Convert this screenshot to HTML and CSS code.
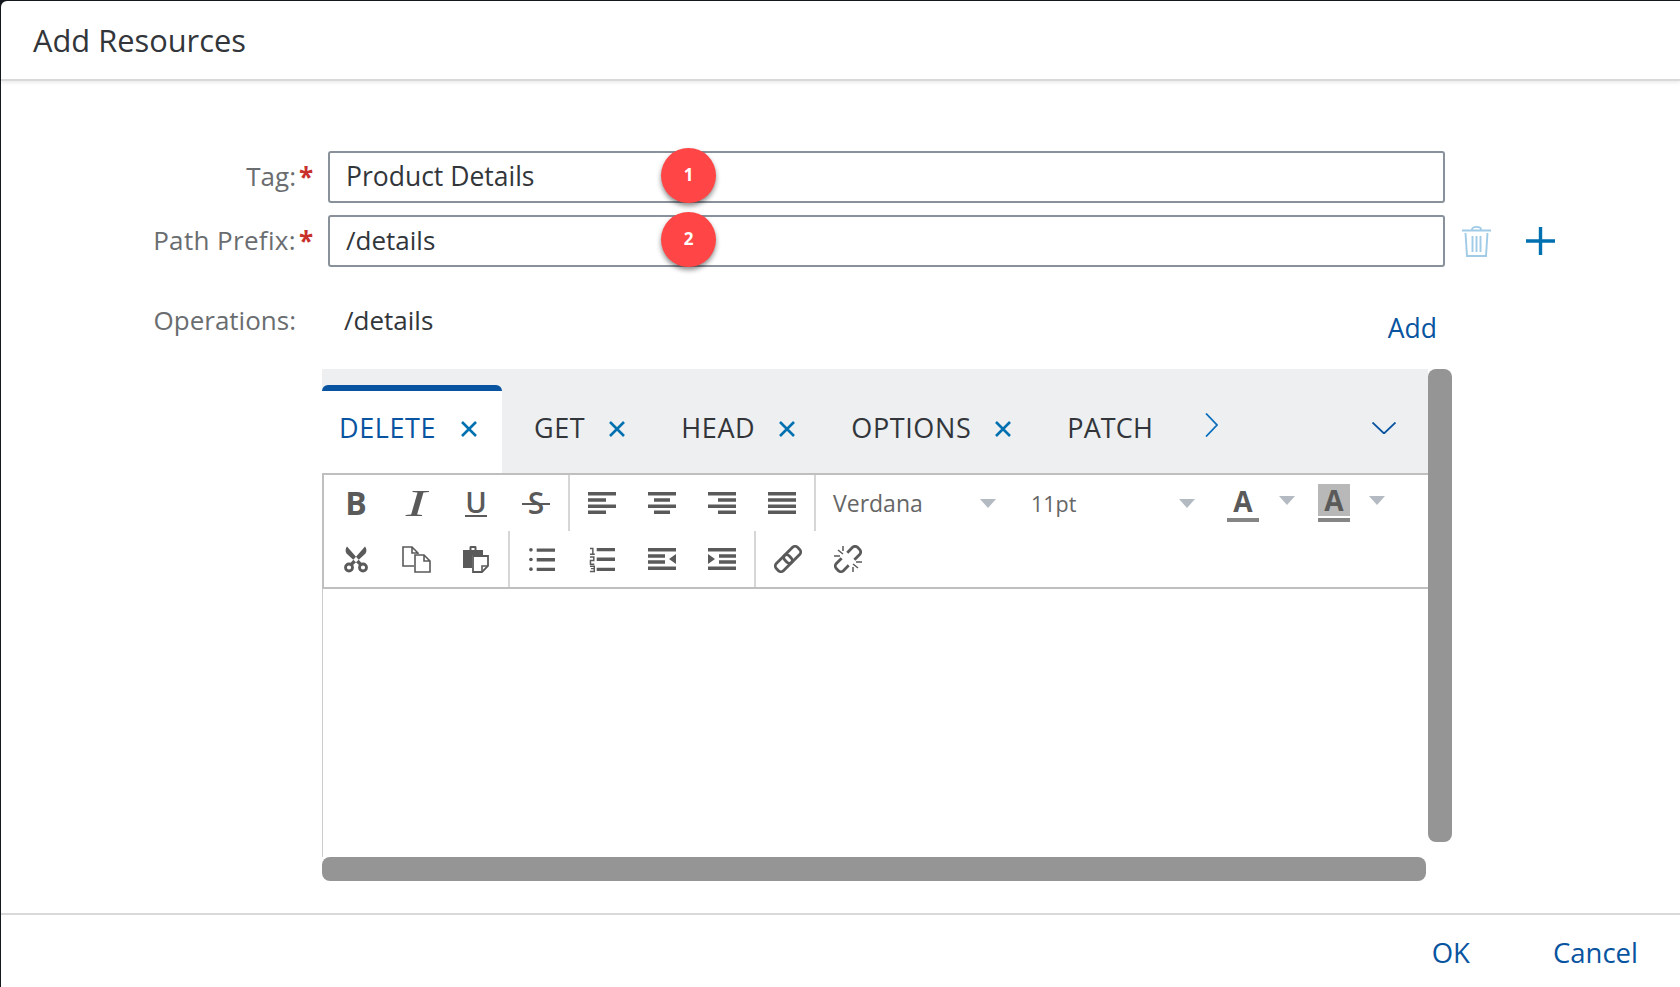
FILE: index.html
```html
<!DOCTYPE html>
<html lang="en">
<head>
    <meta charset="UTF-8">
    <title>Add Resources</title>
    <link rel="stylesheet" href="styles.css">
</head>
<body>

<div class="dialog">
    <div class="header">Add Resources</div>

    <div class="content">
        <div class="row">
            <div class="label">Tag:</div>
            <div class="star">*</div>
            <div class="field">Product Details<span class="badge">1</span></div>
        </div>
        <div class="row row-path">
            <div class="label label-path">Path Prefix:</div>
            <div class="star">*</div>
            <div class="field field-path">/details<span class="badge">2</span></div>
            <svg class="trash" viewBox="0 0 29 32" fill="none" stroke="#9fcbe7" stroke-width="1.900">
                <path d="M0 5.500H29M10 4.500C10 1 19 1 19 4.500M3.500 8L5 31H24L25.500 8M10.500 11V27M14.500 11V27M18.500 11V27"/>
            </svg>
            <svg class="plus" viewBox="0 0 29 28" fill="none" stroke="#0070b1" stroke-width="3.400">
                <path d="M0 14H29M14.500 0V28"/>
            </svg>
        </div>
        <div class="row row-ops">
            <div class="label">Operations:</div>
            <div class="star"></div>
            <div class="ops-value">/details</div>
            <a class="add" href="javascript:;">Add</a>
        </div>

        <div class="editor-wrap">
            <div class="editor-main">
                <!-- tabs -->
                <div class="tabbar">
                    <div class="tab cur">DELETE<svg class="close" viewBox="0 0 16 16"><path d="M1 1L15 15M15 1L1 15"/></svg></div>
                    <div class="tab">GET<svg class="close" viewBox="0 0 16 16"><path d="M1 1L15 15M15 1L1 15"/></svg></div>
                    <div class="tab">HEAD<svg class="close" viewBox="0 0 16 16"><path d="M1 1L15 15M15 1L1 15"/></svg></div>
                    <div class="tab">OPTIONS<svg class="close" viewBox="0 0 16 16"><path d="M1 1L15 15M15 1L1 15"/></svg></div>
                    <div class="tab tab-last">PATCH</div>
                    <svg class="chev-right" viewBox="0 0 13 24"><path d="M1 0.500L12 12L1 23.500"/></svg>
                    <svg class="chev-down" viewBox="0 0 24 12"><path d="M0.500 0.500L12 11.500L23.500 0.500"/></svg>
                </div>

                <!-- toolbar -->
                <div class="toolbar">
                    <div class="tool-row">
                        <div class="group">
                            <div class="btn"><span class="t-b">B</span></div>
                            <div class="btn"><span class="t-i">I</span></div>
                            <div class="btn"><span class="t-u">U</span></div>
                            <div class="btn"><span class="t-s">S</span></div>
                        </div>
                        <div class="group">
                            <div class="btn"><svg class="ico" viewBox="0 0 28 22"><path d="M0 0H28V3.500H0ZM0 6.300H18V9.800H0ZM0 12.600H28V16.100H0ZM0 18.500H18V22H0Z"/></svg></div>
                            <div class="btn"><svg class="ico" viewBox="0 0 28 22"><path d="M0 0H28V3.500H0ZM6 6.300H22V9.800H6ZM0 12.600H28V16.100H0ZM6 18.500H22V22H6Z"/></svg></div>
                            <div class="btn"><svg class="ico" viewBox="0 0 28 22"><path d="M0 0H28V3.500H0ZM10 6.300H28V9.800H10ZM0 12.600H28V16.100H0ZM10 18.500H28V22H10Z"/></svg></div>
                            <div class="btn"><svg class="ico" viewBox="0 0 28 22"><path d="M0 0H28V3.500H0ZM0 6.300H28V9.800H0ZM0 12.600H28V16.100H0ZM0 18.500H28V22H0Z"/></svg></div>
                        </div>
                        <div class="select">Verdana<i class="caret"></i></div>
                        <div class="select select-size">11pt<i class="caret"></i></div>
                        <div class="color-a"><span>A</span></div>
                        <i class="caret caret-a"></i>
                        <div class="color-a color-bg"><span>A</span></div>
                        <i class="caret caret-b"></i>
                    </div>
                    <div class="tool-row">
                        <div class="group">
                            <div class="btn">
                                <svg class="ico-lg" viewBox="0 0 26 26" fill="#5a5a5a">
                                    <path d="M4 0L19 17L16.500 19L3.500 7C2 4.500 2.500 2 4 0ZM22 0L7 17L9.500 19L22.500 7C24 4.500 23.500 2 22 0Z"/>
                                    <circle cx="6" cy="21" r="3.500" fill="none" stroke="#5a5a5a" stroke-width="2.800"/>
                                    <circle cx="20" cy="21" r="3.500" fill="none" stroke="#5a5a5a" stroke-width="2.800"/>
                                </svg>
                            </div>
                            <div class="btn">
                                <svg class="ico-lg ico-wide" viewBox="0 0 29 27" fill="none" stroke="#5a5a5a" stroke-width="1.600">
                                    <path d="M12 20H1V1H10L16 7V8M10 1V7H16"/>
                                    <path d="M13 9H22L28 15V26H13ZM22 9V15H28"/>
                                </svg>
                            </div>
                            <div class="btn">
                                <svg class="ico-lg" viewBox="0 0 26 27" fill="#5a5a5a">
                                    <path d="M0 4H6.500V1.500C6.500 0.500 7 0 8 0H12C13 0 13.500 0.500 13.500 1.500V4H20V9H9V22H0ZM8.500 2V4H11.500V2Z"/>
                                    <path d="M10 10H25V20L19 26H10Z" fill="#fff" stroke="#5a5a5a" stroke-width="1.800"/>
                                    <path d="M19 26V20H25" fill="none" stroke="#5a5a5a" stroke-width="1.600"/>
                                </svg>
                            </div>
                        </div>
                        <div class="group">
                            <div class="btn">
                                <svg class="ico-lg" viewBox="0 0 27 24" fill="#5a5a5a">
                                    <circle cx="2" cy="2" r="1.900"/><circle cx="2" cy="12" r="1.900"/><circle cx="2" cy="22" r="1.900"/>
                                    <path d="M8 0.500H27V4H8ZM8 10.500H27V14H8ZM8 20.500H27V24H8Z"/>
                                </svg>
                            </div>
                            <div class="btn">
                                <svg class="ico-lg" viewBox="0 0 27 26" fill="#5a5a5a">
                                    <path d="M8 1H27V4.500H8ZM8 11H27V14.500H8ZM8 21.500H27V25H8Z"/>
                                    <path d="M1 1.500H4V7M1 7.500H6M1 10.500H5V14H1.500V18H5.500M1 20H5.500V22.500H2M5.500 22.500V25.500H1" fill="none" stroke="#5a5a5a" stroke-width="1.500"/>
                                </svg>
                            </div>
                            <div class="btn">
                                <svg class="ico" viewBox="0 0 28 22"><path d="M0 0H28V3.500H0ZM0 6.300H17V9.800H0ZM0 12.300H17V15.800H0ZM0 18.500H28V22H0ZM28 6V16L21 11Z"/></svg>
                            </div>
                            <div class="btn">
                                <svg class="ico" viewBox="0 0 28 22"><path d="M0 0H28V3.500H0ZM11 6.300H28V9.800H11ZM11 12.300H28V15.800H11ZM0 18.500H28V22H0ZM0 6V16L7 11Z"/></svg>
                            </div>
                        </div>
                        <div class="group group-last">
                            <div class="btn">
                                <svg class="ico-lg ico-link" viewBox="0 0 28 28" fill="none" stroke="#5a5a5a" stroke-width="2.800">
                                    <g transform="rotate(-45 14 14)">
                                        <rect x="-1" y="9" width="18" height="10" rx="3.500"/>
                                        <rect x="11" y="9" width="18" height="10" rx="3.500"/>
                                    </g>
                                </svg>
                            </div>
                            <div class="btn">
                                <svg class="ico-lg ico-link" viewBox="0 0 28 28" fill="none" stroke="#5a5a5a" stroke-width="2.800">
                                    <g transform="rotate(-45 14 14)">
                                        <path d="M10 9H2.500A3.500 3.500 0 0 0 -1 12.500V15.500A3.500 3.500 0 0 0 2.500 19H10"/>
                                        <path d="M18 9H25.500A3.500 3.500 0 0 1 29 12.500V15.500A3.500 3.500 0 0 1 25.500 19H18"/>
                                    </g>
                                    <path stroke-width="1.500" d="M4 5L9 9M9 1V6M0 11H6M19 19L24 23M22 17H28M19 22V27"/>
                                </svg>
                            </div>
                        </div>
                    </div>
                </div>

                <div class="edit-area"></div>
                <div class="hscroll"></div>
            </div>
            <div class="vscroll"></div>
        </div>
    </div>

    <div class="footer">
        <a href="javascript:;">OK</a>
        <a href="javascript:;">Cancel</a>
    </div>
</div>

</body>
</html>
```

FILE: styles.css
```css
*{
    margin: 0;
    padding: 0;
    box-sizing: border-box;
}
a{
    text-decoration: none;
    color: #0854a0;
}
html, body{
    width: 100%;
    height: 100%;
    overflow: hidden;
}
body{
    background-color: #14181c;
    padding: 1px 0 0 1px;
    font-family: "Open Sans", "Liberation Sans", sans-serif;
    color: #32363a;
}
.dialog{
    height: 986px;
    background-color: #fff;
    border-top-left-radius: 6px;
    display: flex;
    flex-direction: column;
}
.header{
    height: 80px;
    flex: none;
    padding-left: 32px;
    display: flex;
    align-items: center;
    font-size: 30.800px;
    border-bottom: 2px solid #d9d9d9;
    box-shadow: 0 2px 3px rgba(0,0,0,0.08);
}

/* form */
.content{
    flex: 1;
    padding-top: 70px;
}
.row{
    display: flex;
    align-items: center;
    height: 52px;
}
.row-path{
    margin-top: 12px;
}
.row-ops{
    margin-top: 34px;
    height: 40px;
    width: 1444px;
}
.label{
    width: 295px;
    padding-bottom: 2px;
    text-align: right;
    font-size: 26px;
    color: #6a6d70;
}
.label-path{
    letter-spacing: 0.35px;
}
.star{
    width: 32px;
    padding-left: 3px;
    font-size: 26px;
    font-weight: 700;
    color: #c9302c;
}
.field{
    position: relative;
    width: 1117px;
    height: 52px;
    border: 2px solid #89919a;
    border-radius: 3px;
    padding: 0 0 2px 16px;
    display: flex;
    align-items: center;
    font-size: 26.500px;
}
.field-path{
    font-size: 26px;
}
.badge{
    position: absolute;
    left: 331px;
    top: -5px;
    width: 55px;
    height: 55px;
    padding-bottom: 2px;
    border-radius: 50%;
    background-color: #ff4545;
    box-shadow: 0 3px 5px rgba(0,0,0,0.45);
    color: #fff;
    font-size: 17px;
    font-weight: 700;
    display: flex;
    justify-content: center;
    align-items: center;
}
.trash{
    width: 29px;
    height: 32px;
    margin-left: 17px;
}
.plus{
    width: 29px;
    height: 28px;
    margin-left: 35px;
}
.ops-value{
    flex: 1;
    margin-left: 16px;
    padding-bottom: 2px;
    font-size: 26px;
}
.add{
    font-size: 26.500px;
    padding: 13px 8px 0 0;
}

/* editor */
.editor-wrap{
    display: flex;
    align-items: flex-start;
    margin: 28px 0 0 321px;
}
.editor-main{
    width: 1106px;
}
.vscroll{
    width: 24px;
    height: 473px;
    background-color: #959595;
    border-radius: 8px;
}
.hscroll{
    width: 1104px;
    height: 24px;
    background-color: #959595;
    border-radius: 8px;
}
.tabbar{
    height: 104px;
    padding-top: 16px;
    background-color: #edeff1;
    display: flex;
    align-items: stretch;
}
.tab{
    display: flex;
    align-items: center;
    padding: 0 24px 4px 32px;
    font-size: 27px;
    letter-spacing: 0.6px;
}
.tab.cur{
    width: 180px;
    padding: 0 0 10px 17px;
    background-color: #fff;
    border-top: 6px solid #0854a0;
    border-radius: 6px 6px 0 0;
    color: #0854a0;
}
.tab.cur .close{
    margin-left: 25px;
}
.tab-last{
    padding-left: 32px;
    padding-right: 0;
    letter-spacing: 0.1px;
}
.close{
    width: 16px;
    height: 16px;
    margin: 4px 0 0 24px;
    fill: none;
    stroke: #0070b1;
    stroke-width: 2.600;
}
.chev-right{
    width: 13px;
    height: 24px;
    margin: 28px 0 0 52px;
    fill: none;
    stroke: #0a6ebd;
    stroke-width: 1.800;
}
.chev-down{
    width: 24px;
    height: 12px;
    margin: 37px 32px 0 auto;
    fill: none;
    stroke: #0854a0;
    stroke-width: 1.800;
}

/* toolbar */
.toolbar{
    border: 2px solid #bfbfbf;
    border-width: 2px 0 2px 2px;
}
.tool-row{
    display: flex;
    align-items: center;
    height: 56px;
}
.group{
    display: flex;
    align-self: stretch;
    padding: 0 2px;
    border-right: 2px solid #d6d6d6;
}
.group-last{
    border-right: 0;
}
.btn{
    width: 60px;
    display: flex;
    justify-content: center;
    align-items: center;
    color: #5a5a5a;
}
.ico{
    width: 28px;
    height: 22px;
    fill: #5a5a5a;
}
.ico-lg{
    width: 26px;
    height: 27px;
}
.ico-wide{
    width: 29px;
}
.ico-link{
    width: 28px;
    height: 28px;
}
.t-b{
    font: 700 32px "Open Sans", sans-serif;
    line-height: 1;
}
.t-i{
    display: inline-block;
    font: italic 400 37px "Liberation Serif", serif;
    line-height: 1;
    transform: scaleX(1.7);
}
.t-u{
    font: 600 29px "Open Sans", sans-serif;
    line-height: 26px;
    border-bottom: 2px solid #5a5a5a;
}
.t-s{
    position: relative;
    font: 600 30px "Open Sans", sans-serif;
    line-height: 1;
}
/* the strike line is longer than the letter */
.t-s:after{
    content: "";
    position: absolute;
    left: -6px;
    right: -6px;
    top: 15px;
    height: 2px;
    background-color: #5a5a5a;
}
.select{
    width: 198px;
    padding: 0 18px 0 17px;
    display: flex;
    justify-content: space-between;
    align-items: center;
    font-size: 23px;
    color: #666;
}
.select-size{
    width: 199px;
    font-size: 21.500px;
}
.caret{
    display: block;
    width: 0;
    height: 0;
    border-left: 8px solid transparent;
    border-right: 8px solid transparent;
    border-top: 9px solid #b3bac1;
}
.caret-a{
    margin: -6px 0 0 20px;
}
.caret-b{
    margin: -6px 0 0 19px;
}
.color-a{
    width: 32px;
    height: 38px;
    margin-left: 14px;
    border-bottom: 4px solid #858585;
    text-align: center;
    color: #5a5a5a;
    font-size: 28px;
    font-weight: 700;
    line-height: 34px;
}
.color-a span{
    display: block;
}
.color-bg{
    margin-left: 23px;
}
.color-bg span{
    height: 32px;
    background-color: #b8b8b8;
    line-height: 32px;
}
.edit-area{
    height: 268px;
    border-left: 1px solid #ccc;
}

/* footer */
.footer{
    flex: none;
    height: 74px;
    border-top: 2px solid #d9d9d9;
    padding: 3px 42px 0 0;
    display: flex;
    justify-content: flex-end;
    align-items: center;
    gap: 83px;
    font-size: 27.500px;
}
```
